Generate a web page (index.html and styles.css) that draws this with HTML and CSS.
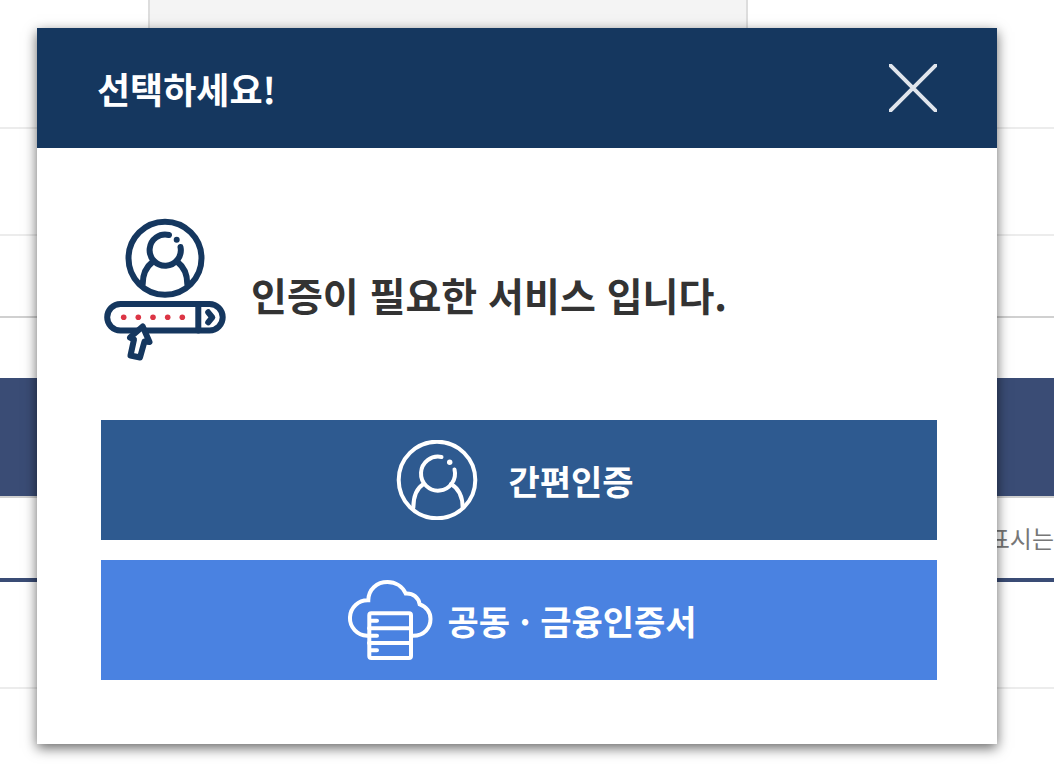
FILE: index.html
```
<!DOCTYPE html>
<html lang="ko">
  <head>
    <meta charset="utf-8">
    <title>인증 선택</title>
    <link rel="stylesheet" href="styles.css">
  </head>
  <body>

    <!-- 뒤쪽 페이지 -->
    <main class="page">
      <div class="row row-top"><div class="panel"></div></div>
      <div class="row row-item"></div>
      <div class="row row-last"></div>
      <div class="bar"></div>
      <p class="notice">표시는</p>
      <div class="row row-bottom"></div>
    </main>

    <!-- 인증 선택 팝업 -->
    <div class="popup" role="dialog" aria-labelledby="popup-title">
      <header class="popup-head">
        <h1 id="popup-title">선택하세요!</h1>
        <button type="button" class="close" aria-label="닫기">
          <svg width="48" height="48" viewBox="0 0 48 48">
            <path d="M0 0L48 48M48 0L0 48"/>
          </svg>
        </button>
      </header>

      <div class="popup-body">
        <div class="intro">
          <svg class="intro-icon" width="128" height="144" viewBox="-3 0 128 144">
            <circle cx="61" cy="40.3" r="36.5"/>
            <path d="M65 17A15.6 15.6 0 1 0 76.5 29"/>
            <path d="M48.5 44C42 49 38.7 55 38.7 66M73.5 44C80 49 83.3 55 83.3 66"/>
            <circle class="fill" cx="72.7" cy="21.7" r="3"/>
            <rect x="3.2" y="86" width="115.5" height="26.5" rx="13.2"/>
            <path d="M94.3 86V112.5"/>
            <path class="chevron" d="M104.2 94.3L108.3 99.3L104.2 104.3"/>
            <g class="pin">
              <circle cx="19.7" cy="99.3" r="2.8"/>
              <circle cx="34.3" cy="99.3" r="2.8"/>
              <circle cx="49" cy="99.3" r="2.8"/>
              <circle cx="63.7" cy="99.3" r="2.8"/>
              <circle cx="78.3" cy="99.3" r="2.8"/>
            </g>
            <path class="cursor" d="M38.7 108.5L45.5 124L40.5 123.5L36 139.5L26.5 137.5L30 121.5L26 119.5Z"/>
          </svg>
          <p>인증이 필요한 서비스 입니다.</p>
        </div>

        <button type="button" class="btn btn-simple">
          <svg width="82" height="80" viewBox="0 0 82 80">
            <circle cx="41" cy="40" r="38.3"/>
            <path d="M45.5 17A17 17 0 1 0 58.5 29.5"/>
            <path d="M27.5 44C21 48 17.3 56 17.3 68M55 44C62 48 66.7 56 66.7 68"/>
            <circle class="fill" cx="53.7" cy="22.3" r="2.7"/>
          </svg>
          <span>간편인증</span>
        </button>

        <button type="button" class="btn btn-cert">
          <svg width="86" height="80" viewBox="0 0 86 80">
            <path d="M22 55.7H20A17.7 17.7 0 0 1 21.3 20.3C21.5 9 30 2 40.5 2C48.5 2 55.5 6.5 58.7 13.5C66 13 71.5 17.5 72.7 24.3C79.5 26.5 83.5 32.5 83.5 39C83.5 47.5 77.5 55.7 66 55.7"/>
            <rect x="22.3" y="33.3" width="41.7" height="44.7" rx="2"/>
            <path d="M22 48.3H64M22 63H64M24 40.7H30M24 55.7H30M24 70.3H30"/>
          </svg>
          <span>공동 · 금융인증서</span>
        </button>
      </div>
    </div>

  </body>
</html>
```
FILE: styles.css
```
html, body {
    padding: 0;
    margin: 0;
}

body {
    position: relative;
    background: #fff;
    font-family: "Noto Sans CJK KR", sans-serif;
}

h1, p {
    margin: 0;
}

button {
    border: 0;
    padding: 0;
    font-family: inherit;
    cursor: pointer;
}

svg {
    display: block;
    flex: none;
    fill: none;
}

/* page */
.page {
    min-height: 100vh;
}

.row {
    border-bottom: 2px solid #ececec;
}

.row-top {
    height: 127px;
}

.panel {
    box-sizing: border-box;
    width: 600px;
    height: 100px;
    margin-left: 148px;
    border: 2px solid #ddd;
    border-top: 0;
    background: #f4f4f4;
}

.row-item {
    height: 105px;
}

.row-last {
    height: 80px;
    border-color: #d0d0d0;
}

.bar {
    height: 118px;
    margin-top: 60px;
    border-bottom: 2px solid #d0d0d0;
    background: #3a4c75;
}

.notice {
    border-bottom: 4px solid #3a4c75;
    color: #777;
    font-size: 24px;
    line-height: 80px;
    text-align: right;
    white-space: nowrap;
}

.row-bottom {
    height: 105px;
}

/* popup */
.popup {
    position: absolute;
    top: 28px;
    left: 37px;
    right: 57px;
    background: #fff;
    box-shadow: 0 4px 12px rgba(0, 0, 0, 0.6);
}

.popup-head {
    display: flex;
    align-items: center;
    justify-content: space-between;
    height: 120px;
    padding: 0 60px;
    background: #15375f;
}

.popup-head h1 {
    color: #fff;
    font-size: 36px;
    font-weight: 700;
}

.close {
    background: none;
}

.close svg {
    stroke: #e0e5ec;
    stroke-width: 4;
}

.popup-body {
    display: flex;
    flex-direction: column;
    gap: 20px;
    padding: 70px 60px 64px 64px;
}

.intro {
    display: flex;
    align-items: center;
    gap: 22px;
    margin-bottom: 38px;
}

.intro p {
    padding-top: 8px;
    color: #333;
    font-size: 39px;
    font-weight: 700;
}

.intro-icon {
    stroke: #15375f;
    stroke-width: 6;
    stroke-linecap: round;
    stroke-linejoin: round;
}

.intro-icon .fill {
    fill: #15375f;
    stroke: none;
}

.intro-icon .pin {
    fill: #dc3545;
    stroke: none;
}

.intro-icon .cursor {
    fill: #fff;
}

.btn {
    display: flex;
    align-items: center;
    justify-content: center;
    height: 120px;
    color: #fff;
    font-size: 34px;
    font-weight: 700;
}

.btn svg {
    stroke: #fff;
    stroke-width: 4;
    stroke-linecap: round;
}

.btn .fill {
    fill: #fff;
    stroke: none;
}

.btn-simple {
    gap: 30px;
    padding-right: 8px;
    background: #2e5a90;
}

.btn-cert {
    gap: 14px;
    padding-left: 6px;
    background: #4a82e1;
}
```
